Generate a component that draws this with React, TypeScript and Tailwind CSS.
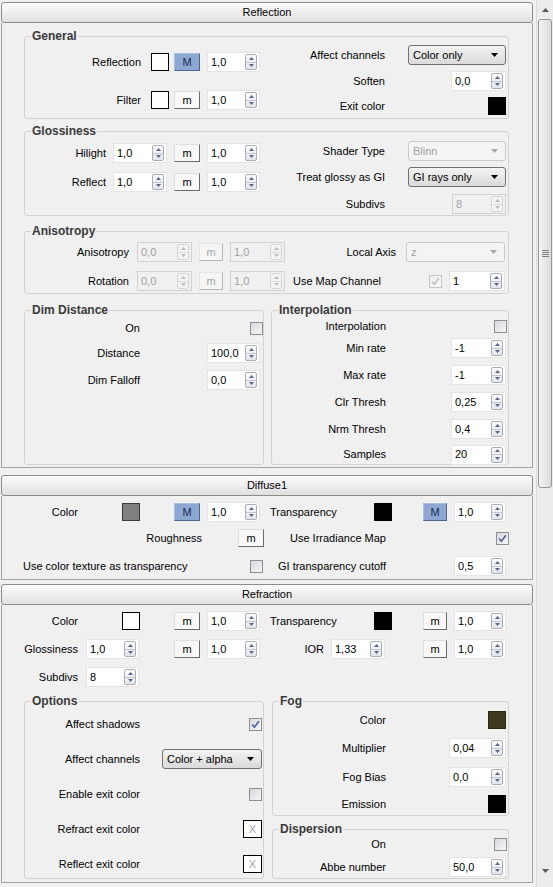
import React from "react"

type P = { c?: string; children?: React.ReactNode }

const Row = ({ c = "", children }: P) => (
  <div className={`flex items-center shrink-0 ${c}`}>{children}</div>
)

const Lab = ({ c = "", children }: P) => (
  <span className={`shrink-0 whitespace-nowrap ${c}`}>{children}</span>
)

const Arrows = ({ off }: { off?: boolean }) => (
  <div
    className={`flex flex-col shrink-0 w-[12px] h-[16px] rounded-[2px] border ${
      off
        ? "border-[#d6d6d6] bg-[#f3f3f3]"
        : "border-[#a9aeb8] bg-gradient-to-b from-[#fbfbfb] to-[#e3e5ea]"
    }`}
  >
    <div
      className={`flex-1 flex items-center justify-center border-b ${
        off ? "border-[#dcdcdc]" : "border-[#c3c7cf]"
      }`}
    >
      <svg width="5" height="3" viewBox="0 0 5 3">
        <path d="M2.5 0L5 3H0z" fill={off ? "#bcbcbc" : "#56698c"} />
      </svg>
    </div>
    <div className="flex-1 flex items-center justify-center">
      <svg width="5" height="3" viewBox="0 0 5 3">
        <path d="M0 0H5L2.5 3z" fill={off ? "#bcbcbc" : "#56698c"} />
      </svg>
    </div>
  </div>
)

const Spin = ({ v, c = "", off }: { v: string; c?: string; off?: boolean }) => (
  <div
    className={`flex items-center shrink-0 h-[20px] pr-[2px] border ${
      off
        ? "border-[#d2d2d2] bg-[#f0f0f0] text-[#a2a2a2]"
        : "border-[#e4e4e4] bg-white text-black"
    } ${c}`}
  >
    <span className="flex-1 pl-[3px]">{v}</span>
    <Arrows off={off} />
  </div>
)

const Btn = ({ big, off, c = "" }: { big?: boolean; off?: boolean; c?: string }) => (
  <div
    className={`flex items-center justify-center shrink-0 h-[18px] border ${
      big
        ? "bg-[#8ca7d2] border-t-[#a9bedf] border-l-[#a9bedf] border-r-[#51668c] border-b-[#51668c] text-[#1b2c4d]"
        : off
        ? "bg-[#f5f5f5] border-t-[#e6e6e6] border-l-[#e6e6e6] border-r-[#b9b9b9] border-b-[#b9b9b9] text-[#a6a6a6]"
        : "bg-[#f8f8f8] border-t-[#dedede] border-l-[#dedede] border-r-[#6c6c6c] border-b-[#6c6c6c] text-black"
    } ${c}`}
  >
    {big ? "M" : "m"}
  </div>
)

const Swatch = ({ c = "" }: { c?: string }) => (
  <div className={`shrink-0 w-[18px] h-[18px] border ${c}`} />
)

const Check = ({ on, off, c = "" }: { on?: boolean; off?: boolean; c?: string }) => (
  <div
    className={`shrink-0 w-[13px] h-[13px] border flex items-center justify-center bg-gradient-to-br ${
      off
        ? "border-[#c6c6c6] from-[#ececec] to-[#f8f8f8]"
        : "border-[#8e8f8f] from-[#d6d8dc] to-[#f7f7f7]"
    } ${c}`}
  >
    {on && (
      <svg width="9" height="9" viewBox="0 0 9 9">
        <path
          d="M1.2 4.6L3.4 7.2L7.9 1.2"
          stroke={off ? "#c2c2c2" : "#4a5f95"}
          strokeWidth="1.6"
          fill="none"
        />
      </svg>
    )}
  </div>
)

const Drop = ({ v, off, c = "" }: { v: string; off?: boolean; c?: string }) => (
  <div
    className={`flex items-center justify-between shrink-0 h-[20px] pl-[4px] pr-[7px] rounded-[3px] border ${
      off
        ? "border-[#cacaca] bg-[#f4f4f4] text-[#a2a2a2]"
        : "border-[#707070] bg-gradient-to-b from-[#f3f3f3] to-[#dadada] text-black"
    } ${c}`}
  >
    <span>{v}</span>
    <svg width="7" height="4" viewBox="0 0 7 4">
      <path d="M0 0H7L3.5 4z" fill={off ? "#a8a8a8" : "#000"} />
    </svg>
  </div>
)

const XBox = ({ c = "" }: { c?: string }) => (
  <div
    className={`shrink-0 w-[19px] h-[18px] border border-black bg-white flex items-center justify-center text-[#a0a0a0] ${c}`}
  >
    X
  </div>
)

const Group = ({
  title,
  c = "",
  h,
  children,
}: {
  title: string
  c?: string
  h: string
  children?: React.ReactNode
}) => (
  <fieldset className={`shrink-0 border border-[#d3d3d3] rounded-[3px] ${c}`}>
    <legend className="ml-[6px] px-[1px] text-[12px] leading-[13px] font-bold text-[#3a3a3a]">
      {title}
    </legend>
    <div className={h}>{children}</div>
  </fieldset>
)

const Header = ({ title, c = "" }: { title: string; c?: string }) => (
  <div
    className={`shrink-0 h-[21px] rounded-[3px] border border-[#8c8c8c] bg-gradient-to-b from-[#fdfdfd] to-[#e0e0e0] flex items-center justify-center ${c}`}
  >
    {title}
  </div>
)

const Reflection = () => (
  <>
    <Header title="Reflection" c="mt-[2px]" />
    <div className="flex flex-col border-x border-b border-[#a3a3a3] pb-[2px]">
      <Group title="General" c="mt-[7px] ml-[22px] w-[485px]" h="flex h-[75px]">
        <div className="flex flex-col w-[247px] pt-[9px]">
          <Row c="h-[20px]">
            <Lab c="w-[116px] text-right">Reflection</Lab>
            <Swatch c="ml-[10px] border-black bg-white" />
            <Btn big c="ml-[5px] w-[26px]" />
            <Spin v="1,0" c="ml-[7px] w-[53px]" />
          </Row>
          <Row c="h-[20px] mt-[18px]">
            <Lab c="w-[116px] text-right">Filter</Lab>
            <Swatch c="ml-[10px] border-black bg-white" />
            <Btn c="ml-[5px] w-[26px]" />
            <Spin v="1,0" c="ml-[7px] w-[53px]" />
          </Row>
        </div>
        <div className="flex flex-col pt-[2px]">
          <Row c="h-[20px]">
            <Lab c="w-[113px] text-right">Affect channels</Lab>
            <Drop v="Color only" c="ml-[23px] w-[98px]" />
          </Row>
          <Row c="h-[20px] mt-[6px]">
            <Lab c="w-[113px] text-right">Soften</Lab>
            <Spin v="0,0" c="ml-[66px] w-[55px]" />
          </Row>
          <Row c="h-[20px] mt-[5px]">
            <Lab c="w-[113px] text-right">Exit color</Lab>
            <Swatch c="ml-[103px] border-black bg-black" />
          </Row>
        </div>
      </Group>

      <Group title="Glossiness" c="mt-[6px] ml-[22px] w-[485px]" h="flex h-[77px]">
        <div className="flex flex-col w-[247px] pt-[5px]">
          <Row c="h-[20px]">
            <Lab c="w-[81px] text-right">Hilight</Lab>
            <Spin v="1,0" c="ml-[7px] w-[54px]" />
            <Btn c="ml-[7px] w-[26px]" />
            <Spin v="1,0" c="ml-[7px] w-[53px]" />
          </Row>
          <Row c="h-[20px] mt-[9px]">
            <Lab c="w-[81px] text-right">Reflect</Lab>
            <Spin v="1,0" c="ml-[7px] w-[54px]" />
            <Btn c="ml-[7px] w-[26px]" />
            <Spin v="1,0" c="ml-[7px] w-[53px]" />
          </Row>
        </div>
        <div className="flex flex-col pt-[3px]">
          <Row c="h-[20px]">
            <Lab c="w-[113px] text-right">Shader Type</Lab>
            <Drop v="Blinn" off c="ml-[23px] w-[98px]" />
          </Row>
          <Row c="h-[20px] mt-[6px]">
            <Lab c="w-[113px] text-right">Treat glossy as GI</Lab>
            <Drop v="GI rays only" c="ml-[23px] w-[98px]" />
          </Row>
          <Row c="h-[20px] mt-[7px]">
            <Lab c="w-[113px] text-right">Subdivs</Lab>
            <Spin v="8" off c="ml-[67px] w-[54px]" />
          </Row>
        </div>
      </Group>

      <Group title="Anisotropy" c="mt-[9px] ml-[22px] w-[485px]" h="flex flex-col h-[55px]">
        <Row c="h-[20px] mt-[4px]">
          <Lab c="w-[104px] text-right">Anisotropy</Lab>
          <Spin v="0,0" off c="ml-[8px] w-[55px]" />
          <Btn off c="ml-[7px] w-[24px]" />
          <Spin v="1,0" off c="ml-[7px] w-[55px]" />
          <Lab c="w-[111px] text-right">Local Axis</Lab>
          <Drop v="z" off c="ml-[10px] w-[99px]" />
        </Row>
        <Row c="h-[20px] mt-[9px]">
          <Lab c="w-[104px] text-right">Rotation</Lab>
          <Spin v="0,0" off c="ml-[8px] w-[55px]" />
          <Btn off c="ml-[7px] w-[24px]" />
          <Spin v="1,0" off c="ml-[7px] w-[55px]" />
          <Lab c="ml-[8px] w-[136px]">Use Map Channel</Lab>
          <Check on off />
          <Spin v="1" c="ml-[7px] w-[56px]" />
        </Row>
      </Group>

      <div className="flex mt-[10px] ml-[22px]">
        <Group title="Dim Distance" c="w-[240px]" h="flex flex-col h-[147px]">
          <Row c="h-[20px] mt-[1px]">
            <Lab c="w-[115px] text-right">On</Lab>
            <Check c="ml-[110px]" />
          </Row>
          <Row c="h-[20px] mt-[5px]">
            <Lab c="w-[115px] text-right">Distance</Lab>
            <Spin v="100,0" c="ml-[67px] w-[53px]" />
          </Row>
          <Row c="h-[20px] mt-[7px]">
            <Lab c="w-[115px] text-right">Dim Falloff</Lab>
            <Spin v="0,0" c="ml-[67px] w-[53px]" />
          </Row>
        </Group>
        <Group title="Interpolation" c="ml-[7px] w-[238px]" h="flex flex-col h-[147px]">
          <Row c="h-[18px]">
            <Lab c="w-[114px] text-right">Interpolation</Lab>
            <Check c="ml-[108px]" />
          </Row>
          <Row c="h-[20px] mt-[3px]">
            <Lab c="w-[114px] text-right">Min rate</Lab>
            <Spin v="-1" c="ml-[65px] w-[55px]" />
          </Row>
          <Row c="h-[20px] mt-[7px]">
            <Lab c="w-[114px] text-right">Max rate</Lab>
            <Spin v="-1" c="ml-[65px] w-[55px]" />
          </Row>
          <Row c="h-[20px] mt-[7px]">
            <Lab c="w-[114px] text-right">Clr Thresh</Lab>
            <Spin v="0,25" c="ml-[65px] w-[55px]" />
          </Row>
          <Row c="h-[20px] mt-[7px]">
            <Lab c="w-[114px] text-right">Nrm Thresh</Lab>
            <Spin v="0,4" c="ml-[65px] w-[55px]" />
          </Row>
          <Row c="h-[19px] mt-[6px]">
            <Lab c="w-[114px] text-right">Samples</Lab>
            <Spin v="20" c="ml-[65px] w-[55px]" />
          </Row>
        </Group>
      </div>
    </div>
  </>
)

const Diffuse = () => (
  <>
    <Header title="Diffuse1" c="mt-[7px]" />
    <div className="flex flex-col border-x border-b border-[#a3a3a3] pt-[6px] pb-[3px]">
      <Row c="h-[20px]">
        <Lab c="w-[76px] text-right">Color</Lab>
        <Swatch c="ml-[44px] border-[#3c3c3c] bg-[#808080]" />
        <Btn big c="ml-[34px] w-[26px]" />
        <Spin v="1,0" c="ml-[7px] w-[53px]" />
        <Lab c="ml-[10px] w-[66px]">Transparency</Lab>
        <Swatch c="ml-[38px] border-black bg-black" />
        <Btn big c="ml-[31px] w-[24px]" />
        <Spin v="1,0" c="ml-[7px] w-[52px]" />
      </Row>
      <Row c="h-[20px] mt-[6px]">
        <Lab c="w-[200px] text-right">Roughness</Lab>
        <Btn c="ml-[36px] w-[26px]" />
        <Lab c="w-[122px] text-right">Use Irradiance Map</Lab>
        <Check on c="ml-[110px]" />
      </Row>
      <Row c="h-[20px] mt-[8px]">
        <Lab c="ml-[21px] w-[227px]">Use color texture as transparency</Lab>
        <Check />
        <Lab c="w-[123px] text-right">GI transparency cutoff</Lab>
        <Spin v="0,5" c="ml-[68px] w-[52px]" />
      </Row>
    </div>
  </>
)

const Refraction = () => (
  <>
    <Header title="Refraction" c="mt-[4px]" />
    <div className="flex flex-col border-x border-b border-[#a3a3a3] pt-[6px] pb-[3px]">
      <Row c="h-[20px]">
        <Lab c="w-[76px] text-right">Color</Lab>
        <Swatch c="ml-[44px] border-black bg-white" />
        <Btn c="ml-[34px] w-[26px]" />
        <Spin v="1,0" c="ml-[7px] w-[53px]" />
        <Lab c="ml-[10px] w-[66px]">Transparency</Lab>
        <Swatch c="ml-[38px] border-black bg-black" />
        <Btn c="ml-[31px] w-[24px]" />
        <Spin v="1,0" c="ml-[7px] w-[52px]" />
      </Row>
      <Row c="h-[20px] mt-[8px]">
        <Lab c="w-[76px] text-right">Glossiness</Lab>
        <Spin v="1,0" c="ml-[8px] w-[53px]" />
        <Btn c="ml-[35px] w-[26px]" />
        <Spin v="1,0" c="ml-[7px] w-[53px]" />
        <Lab c="w-[64px] text-right">IOR</Lab>
        <Spin v="1,33" c="ml-[7px] w-[54px]" />
        <Btn c="ml-[38px] w-[24px]" />
        <Spin v="1,0" c="ml-[7px] w-[52px]" />
      </Row>
      <Row c="h-[20px] mt-[8px]">
        <Lab c="w-[76px] text-right">Subdivs</Lab>
        <Spin v="8" c="ml-[8px] w-[53px]" />
      </Row>

      <div className="flex mt-[8px] ml-[22px]">
        <Group title="Options" c="w-[240px]" h="flex flex-col h-[170px]">
          <Row c="h-[20px] mt-[6px]">
            <Lab c="w-[115px] text-right">Affect shadows</Lab>
            <Check on c="ml-[109px]" />
          </Row>
          <Row c="h-[20px] mt-[15px]">
            <Lab c="w-[115px] text-right">Affect channels</Lab>
            <Drop v="Color + alpha" c="ml-[22px] w-[100px]" />
          </Row>
          <Row c="h-[20px] mt-[15px]">
            <Lab c="w-[115px] text-right">Enable exit color</Lab>
            <Check c="ml-[109px]" />
          </Row>
          <Row c="h-[20px] mt-[15px]">
            <Lab c="w-[115px] text-right">Refract exit color</Lab>
            <XBox c="ml-[103px]" />
          </Row>
          <Row c="h-[20px] mt-[15px]">
            <Lab c="w-[115px] text-right">Reflect exit color</Lab>
            <XBox c="ml-[103px]" />
          </Row>
        </Group>
        <div className="flex flex-col ml-[8px] w-[237px]">
          <Group title="Fog" c="w-[237px]" h="flex flex-col h-[107px]">
            <Row c="h-[20px] mt-[2px]">
              <Lab c="w-[113px] text-right">Color</Lab>
              <Swatch c="ml-[102px] border-[#2a2715] bg-[#3e3a21]" />
            </Row>
            <Row c="h-[20px] mt-[8px]">
              <Lab c="w-[113px] text-right">Multiplier</Lab>
              <Spin v="0,04" c="ml-[63px] w-[57px]" />
            </Row>
            <Row c="h-[20px] mt-[9px]">
              <Lab c="w-[113px] text-right">Fog Bias</Lab>
              <Spin v="0,0" c="ml-[63px] w-[57px]" />
            </Row>
            <Row c="h-[20px] mt-[7px]">
              <Lab c="w-[113px] text-right">Emission</Lab>
              <Swatch c="ml-[102px] border-black bg-black" />
            </Row>
          </Group>
          <Group title="Dispersion" c="mt-[7px] w-[237px]" h="flex flex-col h-[42px]">
            <Row c="h-[17px]">
              <Lab c="w-[113px] text-right">On</Lab>
              <Check c="ml-[108px]" />
            </Row>
            <Row c="h-[20px] mt-[4px]">
              <Lab c="w-[113px] text-right">Abbe number</Lab>
              <Spin v="50,0" c="ml-[63px] w-[57px]" />
            </Row>
          </Group>
        </div>
      </div>
    </div>
  </>
)

const Scrollbar = () => (
  <div className="ml-[3px] w-[17px] h-[887px] flex flex-col border-l border-[#dadada] bg-[#ececec]">
    <div className="h-[19px] shrink-0 flex items-center justify-center">
      <svg width="7" height="4" viewBox="0 0 7 4">
        <path d="M3.5 0L7 4H0z" fill="#5a5a5a" />
      </svg>
    </div>
    <div className="h-[469px] shrink-0 mx-[1px] rounded-[3px] border border-[#979797] bg-gradient-to-r from-[#f4f4f4] to-[#dcdcdc] flex flex-col items-center justify-center gap-[1px]">
      <div className="w-[7px] h-[1px] bg-[#7d7d7d]" />
      <div className="w-[7px] h-[1px] bg-[#7d7d7d]" />
      <div className="w-[7px] h-[1px] bg-[#7d7d7d]" />
      <div className="w-[7px] h-[1px] bg-[#7d7d7d]" />
    </div>
    <div className="flex-1" />
    <div className="h-[24px] shrink-0 flex items-start justify-center pt-[6px]">
      <svg width="7" height="4" viewBox="0 0 7 4">
        <path d="M0 0H7L3.5 4z" fill="#5a5a5a" />
      </svg>
    </div>
  </div>
)

export default function App() {
  return (
    <div className="w-[553px] h-[887px] overflow-hidden bg-[#f0f0f0] flex text-[11px] leading-[13px] text-black font-['Liberation_Sans',Arial,sans-serif]">
      <div className="w-[532px] ml-[1px] flex flex-col">
        <Reflection />
        <Diffuse />
        <Refraction />
      </div>
      <Scrollbar />
    </div>
  )
}
